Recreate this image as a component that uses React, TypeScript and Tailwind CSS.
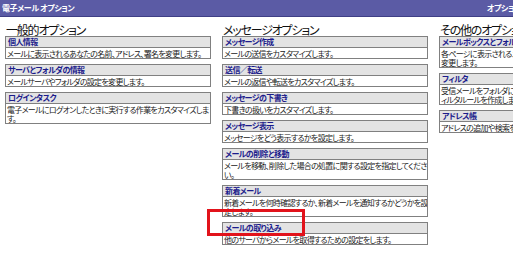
import React from 'react';

type Item = { title: string; lines: string[] };
type Section = { heading: string; items: Item[] };

const sections: Section[] = [
  {
    heading: '一般的オプション',
    items: [
      { title: '個人情報', lines: ['メールに表示されるあなたの名前、アドレス、署名を変更します。'] },
      { title: 'サーバとフォルダの情報', lines: ['メールサーバやフォルダの設定を変更します。'] },
      { title: 'ログインタスク', lines: ['電子メールにログオンしたときに実行する作業をカスタマイズしま', 'す。'] },
    ],
  },
  {
    heading: 'メッセージオプション',
    items: [
      { title: 'メッセージ作成', lines: ['メールの送信をカスタマイズします。'] },
      { title: '送信／転送', lines: ['メールの返信や転送をカスタマイズします。'] },
      { title: 'メッセージの下書き', lines: ['下書きの扱いをカスタマイズします。'] },
      { title: 'メッセージ表示', lines: ['メッセージをどう表示するかを設定します。'] },
      { title: 'メールの削除と移動', lines: ['メールを移動、削除した場合の処置に関する設定を指定してくださ', 'い。'] },
      { title: '新着メール', lines: ['新着メールを何時確認するか、新着メールを通知するかどうかを設', '定します。'] },
      { title: 'メールの取り込み', lines: ['他のサーバからメールを取得するための設定をします。'] },
    ],
  },
  {
    heading: 'その他のオプション',
    items: [
      { title: 'メールボックスとフォルダ', lines: ['各ページに表示されるメールボックスとフォルダの設定を', '変更します。'] },
      { title: 'フィルタ', lines: ['受信メールをフォルダに自動的に振り分けるためのフ', 'ィルタルールを作成します。'] },
      { title: 'アドレス帳', lines: ['アドレスの追加や検索を行います。'] },
    ],
  },
];

const OptionBox: React.FC<{ item: Item }> = ({ item }) => (
  <div className="border border-[#808080] mb-[5px] bg-white">
    <div className="bg-[#e3e3e3] border-b border-[#808080] px-[2px] text-[8px] tracking-[-0.6px] leading-[10px] font-bold text-[#1c1c8c] whitespace-nowrap overflow-hidden">
      {item.title}
    </div>
    <div className="px-[1px] pt-[1px] text-[8px] tracking-[-0.7px] leading-[9px] text-[#222] overflow-hidden">
      {item.lines.map((l, i) => (
        <div key={i} className="whitespace-nowrap">{l}</div>
      ))}
    </div>
  </div>
);

export default function App() {
  return (
    <div className='relative w-[513px] h-[257px] overflow-hidden bg-white font-["Noto_Sans_CJK_JP",sans-serif] [font-feature-settings:"palt"]'>
      {/* title bar */}
      <div className="h-[17px] w-[560px] bg-[#5b5ba5] border-b border-[#3f3f85] flex items-center justify-between pl-[2px] pr-[39px]">
        <span className="text-white text-[8px] tracking-[-0.4px] font-bold">電子メール オプション</span>
        <span className="text-white text-[8px] tracking-[-0.4px] font-bold">オプション</span>
      </div>

      <div className="flex gap-[11px] pl-[5px]">
        {sections.map((s) => (
          <div key={s.heading} className="w-[206px] shrink-0">
            <h2 className="pt-[6px] pl-[1px] text-[12px] tracking-[-1.2px] leading-[13px] text-[#111] whitespace-nowrap">{s.heading}</h2>
            {s.items.map((it) => (
              <OptionBox key={it.title} item={it} />
            ))}
          </div>
        ))}
      </div>

      {/* red highlight */}
      <div className="absolute left-[207px] top-[209px] w-[98px] h-[27px] border-[3px] border-[#e2131b]" />
    </div>
  );
}
